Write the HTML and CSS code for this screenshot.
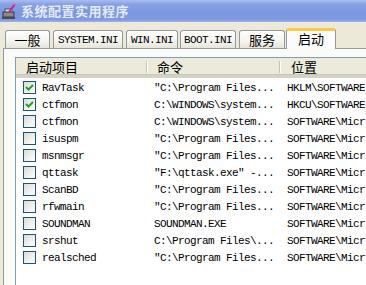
FILE: index.html
```html
<!DOCTYPE html>
<html lang="zh-CN">
  <head>
    <meta charset="UTF-8" />
    <title>系统配置实用程序</title>
    <link rel="stylesheet" href="styles.css">
  </head>
  <body>
    <div class="window">
      <header class="titlebar">
        <svg class="app-icon" width="16" height="16" viewBox="0 0 16 16">
          <rect x="1" y="9" width="11" height="5" fill="#8a8a8a" stroke="#3a3a3a" stroke-width="1"/>
          <rect x="3" y="6" width="7" height="3" fill="#d8d8d8" stroke="#555" stroke-width="1"/>
          <line x1="7" y1="9" x2="13" y2="1" stroke="#d0208a" stroke-width="2"/>
          <line x1="12" y1="2" x2="14" y2="0" stroke="#ff80c0" stroke-width="1"/>
          <rect x="0" y="14" width="13" height="2" fill="#4a4a4a"/>
        </svg>
        <span class="title">系统配置实用程序</span>
      </header>

      <nav class="tabs">
        <div class="tab t-general">一般</div>
        <div class="tab t-system mono">SYSTEM.INI</div>
        <div class="tab t-win mono">WIN.INI</div>
        <div class="tab t-boot mono">BOOT.INI</div>
        <div class="tab t-services">服务</div>
        <div class="tab active t-startup">启动</div>
      </nav>

      <section class="panel">
        <div class="listview">
          <div class="list-header">
            <div class="col c1">启动项目</div>
            <div class="col c2">命令</div>
            <div class="col c3">位置</div>
          </div>
          <div class="rows mono">
            <div class="row">
              <div class="cell c1"><span class="check on"></span>RavTask</div>
              <div class="cell c2">"C:\Program Files...</div>
              <div class="cell c3">HKLM\SOFTWARE</div>
            </div>
            <div class="row">
              <div class="cell c1"><span class="check on"></span>ctfmon</div>
              <div class="cell c2">C:\WINDOWS\system...</div>
              <div class="cell c3">HKCU\SOFTWARE</div>
            </div>
            <div class="row">
              <div class="cell c1"><span class="check"></span>ctfmon</div>
              <div class="cell c2">C:\WINDOWS\system...</div>
              <div class="cell c3">SOFTWARE\Micr</div>
            </div>
            <div class="row">
              <div class="cell c1"><span class="check"></span>isuspm</div>
              <div class="cell c2">"C:\Program Files...</div>
              <div class="cell c3">SOFTWARE\Micr</div>
            </div>
            <div class="row">
              <div class="cell c1"><span class="check"></span>msnmsgr</div>
              <div class="cell c2">"C:\Program Files...</div>
              <div class="cell c3">SOFTWARE\Micr</div>
            </div>
            <div class="row">
              <div class="cell c1"><span class="check"></span>qttask</div>
              <div class="cell c2">"F:\qttask.exe" -...</div>
              <div class="cell c3">SOFTWARE\Micr</div>
            </div>
            <div class="row">
              <div class="cell c1"><span class="check"></span>ScanBD</div>
              <div class="cell c2">"C:\Program Files...</div>
              <div class="cell c3">SOFTWARE\Micr</div>
            </div>
            <div class="row">
              <div class="cell c1"><span class="check"></span>rfwmain</div>
              <div class="cell c2">"C:\Program Files...</div>
              <div class="cell c3">SOFTWARE\Micr</div>
            </div>
            <div class="row">
              <div class="cell c1"><span class="check"></span>SOUNDMAN</div>
              <div class="cell c2">SOUNDMAN.EXE</div>
              <div class="cell c3">SOFTWARE\Micr</div>
            </div>
            <div class="row">
              <div class="cell c1"><span class="check"></span>srshut</div>
              <div class="cell c2">C:\Program Files\...</div>
              <div class="cell c3">SOFTWARE\Micr</div>
            </div>
            <div class="row">
              <div class="cell c1"><span class="check"></span>realsched</div>
              <div class="cell c2">"C:\Program Files...</div>
              <div class="cell c3">SOFTWARE\Micr</div>
            </div>
          </div>
        </div>
      </section>
    </div>
  </body>
</html>
```

FILE: styles.css
```css
/* Base */
* {
  margin: 0;
  padding: 0;
  box-sizing: border-box;
}

html,
body {
  width: 366px;
  height: 285px;
  overflow: hidden;
}

body {
  background: #ece9d8;
  font-family: "Noto Sans CJK SC", "Liberation Sans", sans-serif;
  font-size: 12px;
  color: #000;
}

.mono {
  font-family: "Liberation Mono", "Noto Sans CJK SC", monospace;
  font-size: 11px;
  letter-spacing: -0.6px;
}

.window {
  width: 366px;
  height: 285px;
  display: flex;
  flex-direction: column;
}

/* Title bar (inactive XP look) */
.titlebar {
  height: 22px;
  flex: none;
  display: flex;
  align-items: center;
  padding-left: 2px;
  background: linear-gradient(to bottom, #a9bdf0 0%, #86a0e4 20%, #7b97e0 60%, #7f9ae1 90%, #9fb3e8 100%);
}

.app-icon {
  flex: none;
}

.title {
  margin-left: 3px;
  color: #e3eafa;
  font-size: 13px;
  font-weight: bold;
  letter-spacing: 0.5px;
  line-height: 22px;
}

/* Tabs */
.tabs {
  display: flex;
  align-items: flex-end;
  height: 26px;
  padding-left: 5px;
  flex: none;
  position: relative;
  z-index: 1;
}

.tab {
  flex: none;
  height: 18px;
  border: 1px solid #919b9c;
  border-bottom: none;
  border-radius: 3px 3px 0 0;
  background: linear-gradient(to bottom, #ffffff 0%, #f4f3ee 60%, #e6e4da 100%);
  text-align: center;
  line-height: 17px;
  white-space: nowrap;
}

.mono.tab {
  line-height: 18px;
}

.t-general { width: 45px; margin-right: 3px; font-size: 13px; }
.t-system { width: 70px; margin-right: 3px; }
.t-win { width: 52px; margin-right: 2px; }
.t-boot { width: 56px; margin-right: 3px; }
.t-services { width: 46px; margin-right: 1px; font-size: 13px; }

.tab.active {
  width: 50px;
  height: 21px;
  margin-bottom: -1px;
  background: #fcfcfe;
  border-top: 3px solid #ffc83c;
  border-radius: 3px 3px 0 0;
  font-size: 13px;
  line-height: 16px;
}

/* Tab panel */
.panel {
  flex: 1;
  margin-left: 3px;
  border: 1px solid #919b9c;
  border-right: none;
  border-bottom: none;
  background: #fafaf7;
  padding: 8px 0 0 11px;
}

/* List view */
.listview {
  height: 100%;
  border: 1px solid #7f9db9;
  border-right: none;
  border-bottom: none;
  background: #fff;
}

.list-header {
  display: flex;
  height: 20px;
  background: #ebeadb;
  border-bottom: 3px solid #d6d2c2;
  box-shadow: inset 0 -1px 0 #cbc7b8;
}

.list-header .col {
  flex: none;
  line-height: 17px;
  font-size: 13px;
  position: relative;
}

.list-header .c1 { width: 131px; padding-left: 10px; }
.list-header .c2 { width: 133px; padding-left: 10px; }
.list-header .c3 { padding-left: 11px; }

/* column divider */
.list-header .c1::after,
.list-header .c2::after {
  content: "";
  position: absolute;
  right: 0;
  top: 3px;
  height: 12px;
  width: 1px;
  background: #c7c5b2;
  box-shadow: 1px 0 0 #fff;
}

.rows {
  padding-top: 1px;
}

.row {
  display: flex;
  height: 17px;
  align-items: center;
  white-space: nowrap;
}

.cell {
  flex: none;
  overflow: hidden;
}

.cell.c1 {
  width: 131px;
  padding-left: 7px;
  display: flex;
  align-items: center;
}

.cell.c2 {
  width: 133px;
  padding-left: 7px;
}

.cell.c3 {
  padding-left: 7px;
}

/* XP checkbox */
.check {
  width: 13px;
  height: 13px;
  margin-right: 6px;
  border: 1px solid #1c5180;
  background: linear-gradient(135deg, #dcdcd7 0%, #f0f0ea 55%, #ffffff 100%);
  flex: none;
}

.check.on {
  background:
    url("data:image/svg+xml;utf8,<svg xmlns='http://www.w3.org/2000/svg' width='11' height='11'><path d='M2 5 L4.5 7.5 L9 3' fill='none' stroke='%2321a121' stroke-width='2'/></svg>") no-repeat center,
    linear-gradient(135deg, #dcdcd7 0%, #f0f0ea 55%, #ffffff 100%);
}
```
